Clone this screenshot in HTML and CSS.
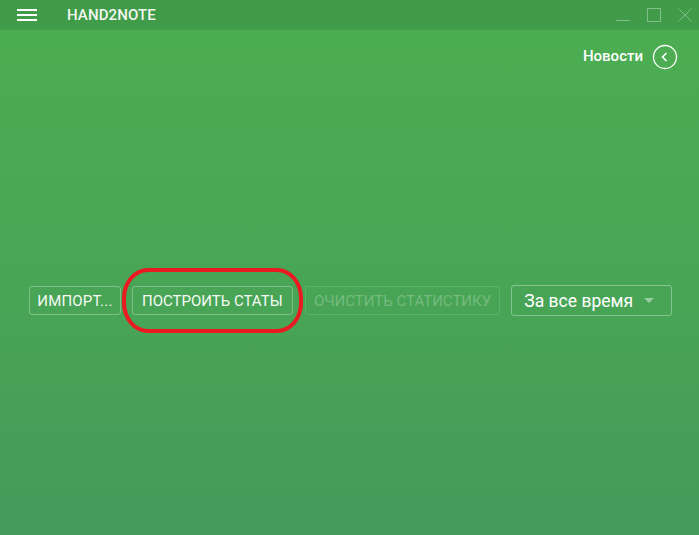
FILE: index.html
```html
<!DOCTYPE html>
<html lang="ru">
<head>
    <meta charset="UTF-8">
    <title>Hand2Note</title>
    <link rel="stylesheet" href="styles.css">
</head>
<body>
    <header class="titlebar">
        <div class="menu-icon">
            <span></span><span></span><span></span>
        </div>
        <div class="app-name">HAND2NOTE</div>
        <div class="win-controls">
            <svg width="16" height="16" viewBox="0 0 16 16"><line x1="1" y1="13.5" x2="15" y2="13.5" stroke="currentColor" stroke-width="1"/></svg>
            <svg width="16" height="16" viewBox="0 0 16 16"><rect x="1.5" y="1.5" width="13" height="13" fill="none" stroke="currentColor" stroke-width="1"/></svg>
            <svg width="16" height="16" viewBox="0 0 16 16"><path d="M1.5 1.5 L14.5 14.5 M14.5 1.5 L1.5 14.5" stroke="currentColor" stroke-width="1"/></svg>
        </div>
    </header>

    <main class="content">
        <div class="news-row">
            <span class="news-label">Новости</span>
            <span class="news-toggle">
                <svg width="26" height="26" viewBox="0 0 26 26">
                    <circle cx="13" cy="13" r="11.5" fill="none" stroke="#fff" stroke-width="1.3"/>
                    <path d="M14.5 9 L10.5 13 L14.5 17" fill="none" stroke="#fff" stroke-width="1.6"/>
                </svg>
            </span>
        </div>

        <div class="actions">
            <button class="btn btn-import">ИМПОРТ...</button>
            <span class="highlight">
                <button class="btn btn-build">ПОСТРОИТЬ СТАТЫ</button>
            </span>
            <button class="btn btn-clear" disabled>ОЧИСТИТЬ СТАТИСТИКУ</button>
            <div class="period-select">
                <span>За все время</span>
                <span class="caret"></span>
            </div>
        </div>
    </main>
</body>
</html>
```

FILE: styles.css
```css
html, body {
    height: 100%;
}
body {
    margin: 0;
    font-family: Roboto, "Liberation Sans", Arial, sans-serif;
    color: #fff;
    background: linear-gradient(to bottom, #4cae51 0%, #48a456 60%, #449a5a 100%);
    overflow: hidden;
}
.titlebar {
    height: 30px;
    background-color: #409c48;
    display: flex;
    align-items: center;
}
.menu-icon {
    width: 20px;
    margin-left: 17px;
    display: flex;
    flex-direction: column;
    gap: 3px;
}
.menu-icon span {
    display: block;
    height: 2px;
    background: #fff;
}
.app-name {
    margin-left: 30px;
    font-size: 15px;
    font-weight: 500;
    letter-spacing: 0.1px;
    color: #f2f7f2;
}
.win-controls {
    margin-left: auto;
    margin-right: 6px;
    display: flex;
    gap: 15px;
    color: rgba(255, 255, 255, 0.35);
}
.win-controls svg {
    display: block;
}
.content {
    padding: 0 27px 0 29px;
}
.news-row {
    display: flex;
    justify-content: flex-end;
    align-items: center;
    gap: 9px;
    padding-top: 14px;
    margin-right: -6px;
}
.news-label {
    font-size: 15px;
    font-weight: 500;
    padding-bottom: 3px;
}
.news-toggle svg {
    display: block;
}
.actions {
    display: flex;
    align-items: center;
    gap: 11px;
    margin-top: 215px;
}
.btn {
    height: 29px;
    padding: 0;
    font-family: inherit;
    font-size: 15px;
    color: #f4faf4;
    background: transparent;
    border: 1px solid rgba(255, 255, 255, 0.3);
    border-radius: 3px;
    text-align: center;
}
.btn-import {
    width: 92px;
    letter-spacing: 0.2px;
}
.btn-build {
    width: 161px;
    display: block;
}
.btn-clear {
    width: 196px;
    color: rgba(255, 255, 255, 0.25);
    border-color: rgba(255, 255, 255, 0.12);
    margin-left: 1px;
}
.highlight {
    position: relative;
    display: block;
}
.highlight::after {
    content: "";
    position: absolute;
    left: -10px;
    right: -10px;
    top: -18px;
    bottom: -18px;
    border: 4px solid #ea1a20;
    border-radius: 26px / 30px;
    pointer-events: none;
}
.period-select {
    height: 29px;
    border: 1px solid rgba(255, 255, 255, 0.35);
    border-radius: 3px;
    display: flex;
    align-items: center;
    padding: 0 0 0 12px;
    font-size: 17.5px;
    box-sizing: content-box;
    width: 147px;
}
.caret {
    margin-left: 11px;
    width: 0;
    height: 0;
    border-left: 5px solid transparent;
    border-right: 5px solid transparent;
    border-top: 5px solid rgba(255, 255, 255, 0.45);
}
```
